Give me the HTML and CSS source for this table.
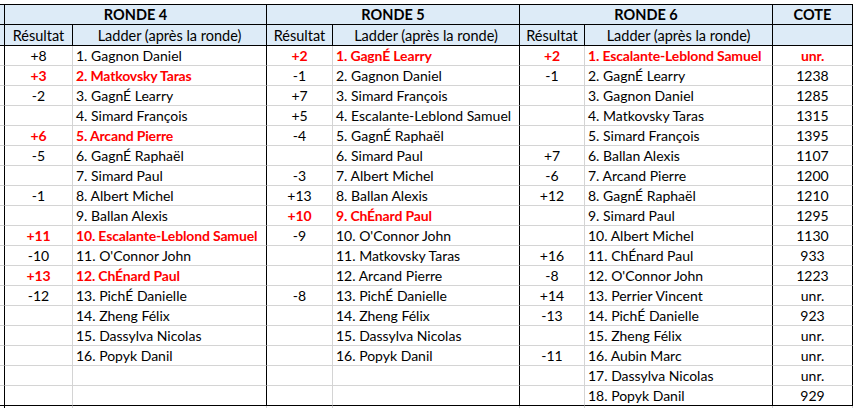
FILE: index.html
```html
<!DOCTYPE html>
<html lang="fr">
<head>
<meta charset="utf-8">
<title>Ladder</title>
<link rel="stylesheet" href="styles.css">
</head>
<body>
<table class="sheet">
  <colgroup>
    <col class="w-e"><col class="w-r4"><col class="w-l4"><col class="w-r5"><col class="w-l5"><col class="w-r6"><col class="w-l6"><col class="w-c">
  </colgroup>
  <tr class="h1">
    <td class="e hd"></td>
    <td class="hd grp" colspan="2">RONDE 4</td>
    <td class="hd grp" colspan="2">RONDE 5</td>
    <td class="hd grp" colspan="2">RONDE 6</td>
    <td class="hd grp">COTE</td>
  </tr>
  <tr class="h2">
    <td class="e hd"></td>
    <td class="hd sub">Résultat</td><td class="hd sub end">Ladder (après la ronde)</td>
    <td class="hd sub">Résultat</td><td class="hd sub end">Ladder (après la ronde)</td>
    <td class="hd sub">Résultat</td><td class="hd sub end">Ladder (après la ronde)</td>
    <td class="hd sub end"></td>
  </tr>
  <tr><td class="e"></td><td class="r">+8</td><td class="l">1. Gagnon Daniel</td><td class="r hot">+2</td><td class="l hot">1. GagnÉ Learry</td><td class="r hot">+2</td><td class="l hot">1. Escalante-Leblond Samuel</td><td class="c hot">unr.</td></tr>
  <tr><td class="e"></td><td class="r hot">+3</td><td class="l hot">2. Matkovsky Taras</td><td class="r">-1</td><td class="l">2. Gagnon Daniel</td><td class="r">-1</td><td class="l">2. GagnÉ Learry</td><td class="c">1238</td></tr>
  <tr><td class="e"></td><td class="r">-2</td><td class="l">3. GagnÉ Learry</td><td class="r">+7</td><td class="l">3. Simard François</td><td class="r"></td><td class="l">3. Gagnon Daniel</td><td class="c">1285</td></tr>
  <tr><td class="e"></td><td class="r"></td><td class="l">4. Simard François</td><td class="r">+5</td><td class="l">4. Escalante-Leblond Samuel</td><td class="r"></td><td class="l">4. Matkovsky Taras</td><td class="c">1315</td></tr>
  <tr><td class="e"></td><td class="r hot">+6</td><td class="l hot">5. Arcand Pierre</td><td class="r">-4</td><td class="l">5. GagnÉ Raphaël</td><td class="r"></td><td class="l">5. Simard François</td><td class="c">1395</td></tr>
  <tr><td class="e"></td><td class="r">-5</td><td class="l">6. GagnÉ Raphaël</td><td class="r"></td><td class="l">6. Simard Paul</td><td class="r">+7</td><td class="l">6. Ballan Alexis</td><td class="c">1107</td></tr>
  <tr><td class="e"></td><td class="r"></td><td class="l">7. Simard Paul</td><td class="r">-3</td><td class="l">7. Albert Michel</td><td class="r">-6</td><td class="l">7. Arcand Pierre</td><td class="c">1200</td></tr>
  <tr><td class="e"></td><td class="r">-1</td><td class="l">8. Albert Michel</td><td class="r">+13</td><td class="l">8. Ballan Alexis</td><td class="r">+12</td><td class="l">8. GagnÉ Raphaël</td><td class="c">1210</td></tr>
  <tr><td class="e"></td><td class="r"></td><td class="l">9. Ballan Alexis</td><td class="r hot">+10</td><td class="l hot">9. ChÉnard Paul</td><td class="r"></td><td class="l">9. Simard Paul</td><td class="c">1295</td></tr>
  <tr><td class="e"></td><td class="r hot">+11</td><td class="l hot">10. Escalante-Leblond Samuel</td><td class="r">-9</td><td class="l">10. O'Connor John</td><td class="r"></td><td class="l">10. Albert Michel</td><td class="c">1130</td></tr>
  <tr><td class="e"></td><td class="r">-10</td><td class="l">11. O'Connor John</td><td class="r"></td><td class="l">11. Matkovsky Taras</td><td class="r">+16</td><td class="l">11. ChÉnard Paul</td><td class="c">933</td></tr>
  <tr><td class="e"></td><td class="r hot">+13</td><td class="l hot">12. ChÉnard Paul</td><td class="r"></td><td class="l">12. Arcand Pierre</td><td class="r">-8</td><td class="l">12. O'Connor John</td><td class="c">1223</td></tr>
  <tr><td class="e"></td><td class="r">-12</td><td class="l">13. PichÉ Danielle</td><td class="r">-8</td><td class="l">13. PichÉ Danielle</td><td class="r">+14</td><td class="l">13. Perrier Vincent</td><td class="c">unr.</td></tr>
  <tr><td class="e"></td><td class="r"></td><td class="l">14. Zheng Félix</td><td class="r"></td><td class="l">14. Zheng Félix</td><td class="r">-13</td><td class="l">14. PichÉ Danielle</td><td class="c">923</td></tr>
  <tr><td class="e"></td><td class="r"></td><td class="l">15. Dassylva Nicolas</td><td class="r"></td><td class="l">15. Dassylva Nicolas</td><td class="r"></td><td class="l">15. Zheng Félix</td><td class="c">unr.</td></tr>
  <tr><td class="e"></td><td class="r"></td><td class="l">16. Popyk Danil</td><td class="r"></td><td class="l">16. Popyk Danil</td><td class="r">-11</td><td class="l">16. Aubin Marc</td><td class="c">unr.</td></tr>
  <tr><td class="e"></td><td class="r"></td><td class="l"></td><td class="r"></td><td class="l"></td><td class="r"></td><td class="l">17. Dassylva Nicolas</td><td class="c">unr.</td></tr>
  <tr class="last"><td class="e"></td><td class="r"></td><td class="l"></td><td class="r"></td><td class="l"></td><td class="r"></td><td class="l">18. Popyk Danil</td><td class="c">929</td></tr>
  <tr class="below"><td class="e"></td><td class="r"></td><td class="r"></td><td class="r"></td><td class="r"></td><td class="r"></td><td class="r"></td><td class="r"></td></tr>
</table>
</body>
</html>
```

FILE: styles.css
```css
html, body {
  margin: 0;
  padding: 0;
  background: #ffffff;
  overflow: hidden;
}

.sheet {
  margin-top: 4px;
  border-collapse: separate;
  border-spacing: 0;
  table-layout: fixed;
  width: 853px;
  border-top: 1px solid #000;
  font-family: "Lato", "Liberation Sans", sans-serif;
  font-size: 14px;
  color: #000;
}

.w-e { width: 5px; }
.w-r4 { width: 68px; }
.w-l4 { width: 194px; }
.w-r5 { width: 66px; }
.w-l5 { width: 187px; }
.w-r6 { width: 65px; }
.w-l6 { width: 188px; }
.w-c { width: 80px; }

.sheet td {
  box-sizing: border-box;
  height: 20px;
  padding: 0;
  line-height: 19px;
  vertical-align: bottom;
  white-space: nowrap;
  overflow: hidden;
  border-right: 1px solid #d4d4d4;
  border-bottom: 1px solid #d4d4d4;
}

.sheet td.e {
  border-right: 1px solid #000;
}

.sheet td.hd {
  background: #ddebf7;
  border-bottom: 1px solid #000;
  border-right: 1px solid #000;
  text-align: center;
  font-size: 14.5px;
}

.h2 td { height: 21px; }

.grp { font-weight: bold; }

.sheet td.r { text-align: center; }

.sheet td.l {
  text-align: left;
  padding-left: 3px;
  border-right: 1px solid #000;
}

.sheet td.c {
  text-align: center;
  border-right: 1px solid #000;
}

.hot {
  color: #ff0000;
  font-weight: bold;
  letter-spacing: -0.15px;
}

.last td { border-bottom: 1px solid #000; }

.below td { border-right: 1px solid #d4d4d4; }
```
